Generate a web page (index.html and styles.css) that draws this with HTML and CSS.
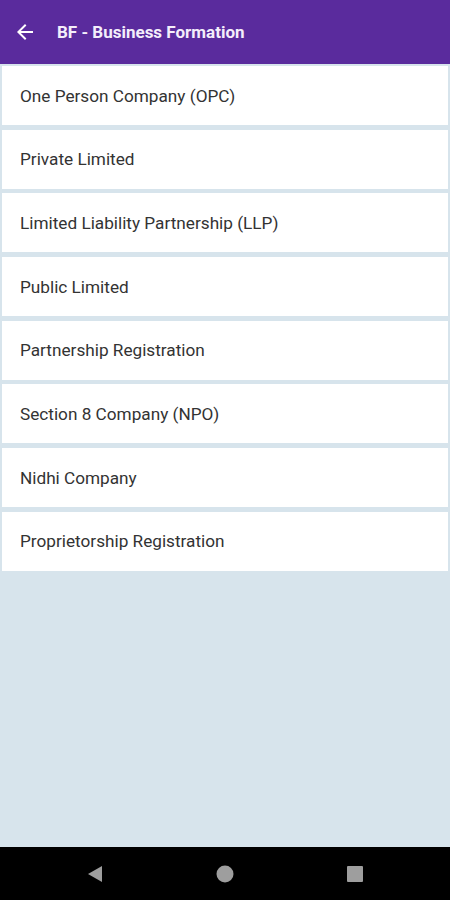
FILE: index.html
```html
<!DOCTYPE html>
<html lang="en">
<head>
  <meta charset="UTF-8" />
  <meta name="viewport" content="width=device-width, initial-scale=1.0" />
  <title>BF - Business Formation</title>
  <link rel="stylesheet" href="styles.css">
</head>
<body>
  <div class="app">
    <header class="toolbar">
      <svg class="back" width="24" height="24" viewBox="0 0 24 24">
        <path d="M20 11H7.83l5.59-5.59L12 4l-8 8 8 8 1.41-1.41L7.83 13H20v-2z" fill="#fff"/>
      </svg>
      <h1 class="title">BF - Business Formation</h1>
    </header>

    <main class="list">
      <div class="item">One Person Company (OPC)</div>
      <div class="item">Private Limited</div>
      <div class="item">Limited Liability Partnership (LLP)</div>
      <div class="item">Public Limited</div>
      <div class="item">Partnership Registration</div>
      <div class="item">Section 8 Company (NPO)</div>
      <div class="item">Nidhi Company</div>
      <div class="item">Proprietorship Registration</div>
    </main>

    <nav class="navbar">
      <svg width="18" height="18" viewBox="0 0 18 18"><path d="M16 1 L16 17 L2 9 Z" fill="#9e9e9e"/></svg>
      <svg width="18" height="18" viewBox="0 0 18 18"><circle cx="9" cy="9" r="8.5" fill="#9e9e9e"/></svg>
      <svg width="18" height="18" viewBox="0 0 18 18"><rect x="1" y="1" width="16" height="16" rx="1" fill="#9e9e9e"/></svg>
    </nav>
  </div>
</body>
</html>
```

FILE: styles.css
```css
body {
  margin: 0;
  font-family: Roboto, 'Noto Sans', sans-serif;
  background-color: #d7e4ec;
}

.app {
  display: flex;
  flex-direction: column;
  height: 900px;
}

.toolbar {
  display: flex;
  align-items: center;
  height: 64px;
  padding: 0 0 0 13px;
  background-color: #5a2b9d;
  color: #fff;
}

.back {
  margin-right: 20px;
}

.title {
  margin: 0;
  font-size: 17px;
  font-weight: 700;
  color: #f4eefb;
}

.list {
  flex: 1;
  display: flex;
  flex-direction: column;
  gap: 4.7px;
  padding: 2px 2px 0;
}

.item {
  height: 59px;
  display: flex;
  align-items: center;
  padding-left: 18px;
  background-color: #fff;
  font-size: 17.2px;
  color: #333;
}

.navbar {
  height: 53px;
  display: flex;
  align-items: center;
  justify-content: space-between;
  padding: 0 86px 0 86px;
  background-color: #000;
}
```
